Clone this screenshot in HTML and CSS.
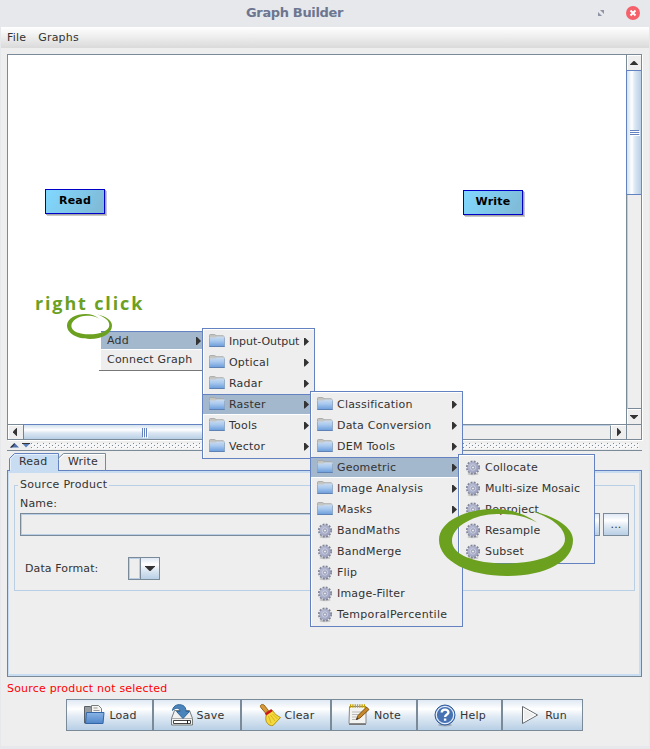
FILE: index.html
```html
<!DOCTYPE html>
<html lang="en">
<head>
<meta charset="utf-8">
<title>Graph Builder</title>
<link rel="stylesheet" href="styles.css">
</head>
<body>
<svg class="defs" width="0" height="0">
  <defs>
    <linearGradient id="gFolder" x1="0" y1="0" x2="0" y2="1"><stop offset="0" stop-color="#ccdcee"/><stop offset=".4" stop-color="#a9c9ee"/><stop offset="1" stop-color="#6699da"/></linearGradient>
    <linearGradient id="gGear" x1="0" y1="0" x2="1" y2="1"><stop offset="0" stop-color="#bcc0d8"/><stop offset="1" stop-color="#989dbc"/></linearGradient>
    <linearGradient id="gBlue" x1="0" y1="0" x2="0" y2="1"><stop offset="0" stop-color="#8ab4e6"/><stop offset="1" stop-color="#4f86c9"/></linearGradient>
    <symbol id="folder" viewBox="0 0 16 14">
      <path d="M.5 5V1.500Q.5 .6 1.300 .6H5.500Q6.200 .6 6.700 1.300L7 1.800H14Q15 1.800 15 2.800V5z" fill="#c6c6c3" stroke="#a3a5a5" stroke-width=".9"/>
      <path d="M0 4Q0 3.400 .6 3.400H6.500L7.500 2.500H15.300Q16 2.500 16 3.200L15.700 13H.3z" fill="url(#gFolder)"/>
      <path d="M.4 12.500h15.200" stroke="#5b7fae" stroke-width=".9"/>
      <path d="M.5 4V12M15.500 3.500V12" stroke="#8ba0b8" stroke-width=".7"/>
    </symbol>
    <symbol id="gear" viewBox="0 0 16 16">
      <ellipse cx="8" cy="14" rx="5.500" ry="1.200" fill="#c8c8c8"/>
      <circle cx="8" cy="7.500" r="6.100" fill="none" stroke="#7f8398" stroke-width="1.900" stroke-dasharray="1.900 1.294"/>
      <circle cx="8" cy="7.500" r="5.400" fill="url(#gGear)" stroke="#8e92ac" stroke-width=".5"/>
      <circle cx="8" cy="7.500" r="2.700" fill="none" stroke="#cdd0e0" stroke-width=".9"/>
      <circle cx="8" cy="7.500" r="1.500" fill="#e8e8ec" stroke="#8a8fa9" stroke-width=".7"/>
    </symbol>
    <symbol id="ring" viewBox="0 0 134 67" preserveAspectRatio="none">
      <path d="M98 13.500C83 6 74 5 58 5C36 5 13 17 13 32C13 46 36 54.500 66 54.500C98 54.500 126 45 126 30C126 18 112 8 89 1C118 7 134 19 134 31C134 53 106 67 68 67C30 67 0 52 0 31C0 12 27 0 55 0C72 0 86 5 98 13.500Z" fill="#6ca01f"/>
    </symbol>
  </defs>
</svg>

<header class="titlebar">
  <h1>Graph Builder</h1>
  <svg class="max" width="6" height="6" viewBox="0 0 6 6"><path d="M2 0h4v4zM0 2v4h4z" fill="#8f93a5"/></svg>
  <svg class="close" width="14" height="14" viewBox="0 0 14 14"><circle cx="7" cy="7" r="7" fill="#f5606a"/><path d="M4.500 4.500l5 5m0-5l-5 5" stroke="#fff" stroke-width="2"/></svg>
</header>

<main class="window">
  <nav class="menubar"><span>File</span><span>Graphs</span></nav>

  <section class="scrollpane">
    <div class="canvas">
      <div class="node node-read">Read</div>
      <div class="node node-write">Write</div>
      <div class="hint">right click</div>
    </div>
    <div class="vbar">
      <div class="arrow"><svg width="8" height="4"><path d="M0 4V3.500L3.500 0h1L8 3.500V4z" fill="#333"/></svg></div>
      <div class="vthumb"><i></i><i></i><i></i></div>
      <div class="vtrack"></div>
      <div class="arrow down"><svg width="8" height="4"><path d="M0 0V.5L3.500 4h1L8 .5V0z" fill="#333"/></svg></div>
    </div>
    <div class="hbar">
      <div class="arrow"><svg width="4" height="8"><path d="M4 0H3.500L0 3.500v1L3.500 8H4z" fill="#333"/></svg></div>
      <div class="hthumb"><i></i><i></i><i></i></div>
      <div class="htrack"></div>
      <div class="arrow right"><svg width="4" height="8"><path d="M0 0H.5L4 3.500v1L.5 8H0z" fill="#333"/></svg></div>
    </div>
    <div class="corner"></div>
  </section>

  <div class="divider">
    <svg width="21" height="5"><path d="M0 4.500L4.500 0 9 4.500z" fill="#4c6fb0"/><path d="M0 4.500L4.500 0V1.500L2 4.500z" fill="#333"/><path d="M12 0h8.500L16 4.500z" fill="#5a80c2"/><path d="M12 0h8v1h-8z" fill="#333"/></svg>
    <svg class="dots" width="608" height="6">
      <defs><pattern id="bumps" width="6" height="4" patternUnits="userSpaceOnUse"><path d="M0 0h1v1H0zM3 2h1v1H3z" fill="#7a8a99"/><path d="M1 1h1v1H1zM4 3h1v1H4z" fill="#fff"/></pattern></defs>
      <rect width="608" height="6" fill="#f5f5f5"/><rect width="608" height="6" fill="url(#bumps)"/>
    </svg>
  </div>

  <section class="tabs">
    <div class="tabrow">
      <div class="tab"><svg width="50" height="18"><path d="M.5 18V5.500L5.500 .5H49.500V18" fill="#c8ddf2" stroke="#6382bf"/><path d="M1.500 17V6L6 1.500h43" fill="none" stroke="#e6f0fb"/></svg><span>Read</span></div>
      <div class="tab write"><svg width="48" height="18"><path d="M0 5.500L5.500 .5H47.500V18" fill="none" stroke="#7a8a99"/><path d="M1 6.500L6 1.500h41" fill="none" stroke="#fff"/></svg><span>Write</span></div>
    </div>
    <div class="tabpanel">
      <fieldset>
        <legend>Source Product</legend>
        <label>Name:</label>
        <div class="namerow"><div class="field"></div><div class="dropbtn"></div><button class="dots-btn">...</button></div>
        <div class="format"><label>Data Format:</label><div class="combo"><div class="value"></div><div class="drop"><svg width="10" height="5"><path d="M0 0h10v.5L5.500 5h-1L0 .5z" fill="#333"/></svg></div></div></div>
      </fieldset>
    </div>
  </section>

  <p class="status">Source product not selected</p>

  <footer class="buttons">
    <button class="b-load"><svg width="24" height="24" viewBox="0 0 24 24"><path d="M2.500 20V3.500h6L10 6h9v13z" fill="#969c9f" stroke="#596168"/><path d="M9.500 12V2.500h7l3 3V12z" fill="#f4f4f2" stroke="#7a7d7c"/><path d="M11.500 5h4M11.500 7.500h6" stroke="#999"/><path d="M4.500 9.500h17.500L21 20.500H3.500z" fill="url(#gBlue)" stroke="#3465a4"/></svg>Load</button>
    <button class="b-save"><svg width="24" height="24" viewBox="0 0 24 24"><path d="M4.500 7.500h15l3 8v6.500h-21V15.500z" fill="#f1f1ef" stroke="#777b7a"/><path d="M2 15.500h20" stroke="#aaa"/><path d="M3.500 17.500h17v3h-17z" fill="#fff" stroke="#444"/><path d="M17.500 17v4" stroke="#222"/><path d="M2.500 7.500C3 2 9 .5 13 2.500c2 1 3 3 3 6h3.500L13 15.500 6.500 8.500H10C10 5 6 4 2.500 7.500z" fill="#4b84ba" stroke="#2f669c"/></svg>Save</button>
    <button class="b-clear"><svg width="24" height="24" viewBox="0 0 24 24"><path d="M8.500 11l6-3.500c2 3.500 5 5.500 8 7L15 22.500c-2 .5-4-.5-5-1.500-2-2-3-5-1.500-10z" fill="#f4d93a" stroke="#b39415"/><path d="M10.500 13l2.500 7M12.500 12l4.500 6M14.500 11l5 5" stroke="#cba519" stroke-width=".7"/><path d="M6 2C4 .5 1.500 2 2.800 4.500L7.500 10l3-2.500z" fill="#d79a3d" stroke="#8f5902" stroke-width=".9"/><path d="M7.500 11.500l6.500-4.500" stroke="#cc1717" stroke-width="2.600"/></svg>Clear</button>
    <button class="b-note"><svg width="24" height="24" viewBox="0 0 24 24"><path d="M2.500 3.500h16.500v17h-17z" fill="#f3f3f1" stroke="#888"/><path d="M2 21.500h17" stroke="#777"/><path d="M5 9h10M5 11.500h10M5 14h7M5 16.500h5" stroke="#bbb"/><path d="M3 3h15" stroke="#c4a000" stroke-width="3.500" stroke-dasharray="1.300 1"/><path d="M9.500 16.500l1.500-4L19.500 4l2.500 2.500-9 8.500z" fill="#c88728" stroke="#734808" stroke-width=".9"/><path d="M9 17l1-2.500 1.500 1.500z" fill="#333"/></svg>Note</button>
    <button class="b-help"><svg width="24" height="24" viewBox="0 0 24 24"><ellipse cx="12" cy="22" rx="7" ry="1.500" fill="#9eabb8"/><circle cx="12" cy="12" r="10" fill="#4772b3" stroke="#315b9c"/><circle cx="12" cy="12" r="8.700" fill="none" stroke="#e5eefb" stroke-width="1.200"/><path d="M8.700 9.500c.2-4 6.800-3.700 6.700 0 0 2-3.300 2-3.300 4.500M12.100 15.500v2.300" fill="none" stroke="#fff" stroke-width="2.400"/></svg>Help</button>
    <button class="b-run"><svg width="24" height="24" viewBox="0 0 24 24"><path d="M4.500 3.500v17L19.500 12z" fill="#eee" stroke="#60666a"/><path d="M5.500 5.300v13.400L17.500 12z" fill="none" stroke="#fff"/></svg>Run</button>
  </footer>
</main>

<div class="context">
  <div class="citem on">Add<svg width="5" height="8"><path d="M0 0h1l4 4-4 4H0z" fill="#333"/></svg></div>
  <div class="citem">Connect Graph</div>
</div>

<ul class="menu m1">
  <li class="sub tight"><svg class="fo"><use href="#folder"/></svg>Input-Output</li>
  <li class="sub"><svg class="fo"><use href="#folder"/></svg>Optical</li>
  <li class="sub"><svg class="fo"><use href="#folder"/></svg>Radar</li>
  <li class="sub on"><svg class="fo"><use href="#folder"/></svg>Raster</li>
  <li class="sub"><svg class="fo"><use href="#folder"/></svg>Tools</li>
  <li class="sub"><svg class="fo"><use href="#folder"/></svg>Vector</li>
</ul>
<ul class="menu m2">
  <li class="sub"><svg class="fo"><use href="#folder"/></svg>Classification</li>
  <li class="sub"><svg class="fo"><use href="#folder"/></svg>Data Conversion</li>
  <li class="sub loose"><svg class="fo"><use href="#folder"/></svg>DEM Tools</li>
  <li class="sub on"><svg class="fo"><use href="#folder"/></svg>Geometric</li>
  <li class="sub"><svg class="fo"><use href="#folder"/></svg>Image Analysis</li>
  <li class="sub"><svg class="fo"><use href="#folder"/></svg>Masks</li>
  <li><svg class="ge"><use href="#gear"/></svg>BandMaths</li>
  <li><svg class="ge"><use href="#gear"/></svg>BandMerge</li>
  <li><svg class="ge"><use href="#gear"/></svg>Flip</li>
  <li><svg class="ge"><use href="#gear"/></svg>Image-Filter</li>
  <li class="loose"><svg class="ge"><use href="#gear"/></svg>TemporalPercentile</li>
</ul>
<ul class="menu m3">
  <li><svg class="ge"><use href="#gear"/></svg>Collocate</li>
  <li class="snug"><svg class="ge"><use href="#gear"/></svg>Multi-size Mosaic</li>
  <li><svg class="ge"><use href="#gear"/></svg>Reproject</li>
  <li><svg class="ge"><use href="#gear"/></svg>Resample</li>
  <li><svg class="ge"><use href="#gear"/></svg>Subset</li>
</ul>
<svg class="ring small"><use href="#ring"/></svg>
<svg class="ring big"><use href="#ring"/></svg>
</body>
</html>
```
FILE: styles.css
```css
* { box-sizing: border-box; }
body {
  margin: 0; width: 650px; height: 749px; overflow: hidden; position: relative;
  background: #e6e8ec; color: #333;
  font: 11px/14px "DejaVu Sans", sans-serif; letter-spacing: .2px;
}
svg { display: block; flex: none; }
.defs { position: absolute; }
i { display: block; }
button { font: inherit; letter-spacing: inherit; color: inherit; padding: 0; margin: 0; }

.titlebar { height: 27px; display: flex; align-items: center; padding: 0 10px 1px 0; }
.titlebar h1 { margin: 0 0 0 246px; width: 352px; font-size: 13px; line-height: 16px; color: #6c7690; letter-spacing: -.35px; white-space: nowrap; }
.max { margin-right: 22px; }

.window { margin: 0 1px; height: 719px; background: #eee; display: flex; flex-direction: column; }
.menubar { height: 21px; background: linear-gradient(#fff, #dadada); display: flex; gap: 12px; padding: 4px 6px 0; }

.scrollpane {
  margin: 6px 7px 0 6px; width: 635px; height: 386px; border: 1px solid #7a8a99; box-shadow: 1px 1px 0 #fff;
  display: grid; grid-template-columns: 618px 15px; grid-template-rows: 369px 15px;
}
.canvas { position: relative; background: #fff; }
.node {
  position: absolute; width: 60px; height: 25px; border: 1px solid #0000c8; color: #000;
  background: linear-gradient(120deg, #80d8ff, #80b8d4); box-shadow: 1px 1px 0 #a5a5a5, 2px 2px 0 #c8c8c8;
  text-align: center; font-weight: bold; line-height: 21px;
}
.node-read { left: 37px; top: 134px; }
.node-write { left: 455px; top: 135px; }
.hint { position: absolute; left: 27px; top: 236px; font: bold 18px/24px "Open Sans", sans-serif; color: #6ca01f; letter-spacing: 1.850px; white-space: nowrap; }

.arrow { flex: none; display: flex; align-items: center; justify-content: center; border: 1px solid #fff; border-width: 1px 0 0 1px; }
.vbar { display: flex; flex-direction: column; border-left: 1px solid #7a8a99; }
.vbar .arrow { height: 15px; padding-right: 1px; padding-bottom: 1px; }
.vbar .down { border-top: 1px solid #7a8a99; box-shadow: inset 0 1px 0 #fff; height: 16px; padding-bottom: 0; }
.vthumb { height: 125px; margin-left: -1px; border: 1px solid #6382bf; border-right: 0; background: linear-gradient(90deg, #d2e2ef, #fff 35%, #dde8f3 55%, #b8cfe5); display: flex; flex-direction: column; align-items: center; justify-content: center; gap: 1px; }
.vthumb i { width: 9px; height: 1px; background: #6382bf; box-shadow: 1px 1px 0 #fff; }
.vtrack { flex: 1; border-left: 1px solid #b8cfe5; }
.hbar { display: flex; border-top: 1px solid #7a8a99; }
.hbar .arrow { width: 15px; padding-right: 2px; padding-bottom: 1px; }
.hbar .right { width: 16px; border-left: 1px solid #7a8a99; box-shadow: inset 1px 0 0 #fff; padding-right: 0; }
.hthumb { width: 243px; margin-top: -1px; border: 1px solid #6382bf; border-bottom: 0; background: linear-gradient(#d2e2ef, #fff 35%, #dde8f3 55%, #b8cfe5); display: flex; align-items: center; justify-content: center; gap: 1px; }
.hthumb i { width: 1px; height: 9px; background: #6382bf; box-shadow: 1px 1px 0 #fff; }
.htrack { flex: 1; border-top: 1px solid #b8cfe5; }
.corner { border: 1px solid #7a8a99; border-width: 1px 0 0 1px; }

.divider { margin: 1px 7px 0 6px; width: 635px; height: 10px; border-bottom: 1px solid #7a8a99; display: flex; padding: 2px 1px 0 3px; }
.dots { margin: 0; }

.tabs { margin: 2px 7px 0 6px; width: 635px; }
.tabrow { display: flex; height: 17px; padding-left: 2px; }
.tab { position: relative; width: 49px; }
.tab span { position: absolute; left: 10px; top: 2px; }
.tabpanel { height: 207px; padding: 8px 5px 0; border: 1px solid #6382bf; border-bottom-color: #7a8a99; box-shadow: inset 0 2px 0 #c8ddf2, inset -2px -2px 0 #c8ddf2, inset 1px 0 0 #c8ddf2; }
.tabpanel fieldset { margin: -1px 0 0 1px; padding: 0 5px; width: 621px; height: 113px; border: 1px solid #b8cfe5; min-width: 0; }
.tabpanel legend { padding: 0 2px; margin-left: -2px; line-height: 14px; letter-spacing: .3px; }
fieldset > label { display: block; margin-top: 5px; }
.namerow { display: flex; height: 23px; margin-top: 2px; }
.field { width: 556px; border: 1px solid #7a8a99; box-shadow: inset 0 0 0 1px #b8cfe5; }
.dropbtn { width: 24px; }
.dropbtn, .dots-btn, .drop { border: 1px solid #7a8a99; background: linear-gradient(#dfe9f4, #fff 30%, #e0eaf4 55%, #b8cfe5); }
.dots-btn { width: 26px; margin-left: 3px; line-height: 14px; }
.format { display: flex; align-items: center; margin: 21px 0 0 5px; }
.format label { width: 103px; letter-spacing: .1px; }
.combo { display: flex; width: 32px; height: 23px; border: 1px solid #7a8a99; }
.value { width: 11px; box-shadow: inset 0 0 0 1px #b8cfe5; }
.drop { flex: 1; border-width: 0 0 0 1px; display: flex; align-items: center; justify-content: center; }

.status { margin: 5px 0 0 6px; color: #f00; }
.buttons { display: flex; height: 32px; margin: 3px 0 0 65px; }
.buttons button { display: flex; align-items: center; justify-content: center; gap: 3px; padding-top: 1px; border: 1px solid #7a8a99; background: linear-gradient(#dfe9f4, #fff 30%, #e0eaf4 55%, #b8cfe5); }
.buttons svg { margin-top: -2px; }
.b-load { width: 87px; }
.b-save { width: 88px; }
.b-clear { width: 90px; }
.b-note { width: 86px; }
.b-help { width: 85px; }
.b-run { width: 81px; }

.context { position: absolute; left: 99px; top: 331px; width: 104px; height: 40px; border-bottom: 1px solid #777; padding-left: 2px; background: linear-gradient(90deg, #fff 2px, #eee 2px); }
.citem { height: 19px; padding: 2px 2px 0 6px; display: flex; justify-content: space-between; border-bottom: 1px solid #fff; white-space: nowrap; }
.citem + .citem { border: 0; padding-top: 3px; }
.context .on { background: #a3b8cc; border-top: 1px solid #6382bf; }
.citem svg { margin-top: 3px; }

.menu { position: absolute; margin: 0; padding: 2px 0 1px; list-style: none; border: 1px solid #6382bf; background: #eee; box-shadow: inset 1px 1px 0 #fff; }
.menu li { height: 21px; display: flex; align-items: center; padding-left: 6px; white-space: nowrap; }
.menu .on { background: #a3b8cc; border-top: 1px solid #6382bf; border-bottom: 1px solid #fff; }
.menu .tight { letter-spacing: -.05px; }
.menu .snug { letter-spacing: .1px; }
.menu .loose { letter-spacing: .32px; }
.menu .sub::after { content: ""; flex: none; margin: 0 5px 0 auto; width: 5px; height: 8px; background: #333; clip-path: polygon(0 0, 15% 0, 100% 50%, 15% 100%, 0 100%); }
.fo { width: 16px; height: 14px; margin: -1px 4px 0 0; }
.ge { width: 16px; height: 16px; margin-right: 4px; }
.m1 { left: 202px; top: 328px; width: 113px; }
.m2 { left: 310px; top: 391px; width: 153px; }
.m3 { left: 458px; top: 454px; width: 137px; }

.ring { position: absolute; pointer-events: none; }
.small { left: 67px; top: 314px; width: 45px; height: 25px; }
.big { left: 439px; top: 509px; width: 134px; height: 67px; }
```
